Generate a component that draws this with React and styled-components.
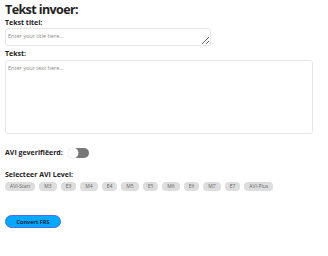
import React, { useState } from 'react'
import styled, { createGlobalStyle } from 'styled-components'

const LEVELS = ['AVI-Start', 'M3', 'E3', 'M4', 'E4', 'M5', 'E5', 'M6', 'E6', 'M7', 'E7', 'AVI-Plus']

const GlobalStyle = createGlobalStyle`
  body {
    margin: 0;
    background: #fff;
    font-family: 'Open Sans', 'Liberation Sans', sans-serif;
    color: #222;
  }
`

const App = () => {
  const [verified, setVerified] = useState(false)

  return (
    <Page>
      <GlobalStyle />
      <Heading>Tekst invoer:</Heading>
      <Label $top={2}>Tekst titel:</Label>
      <TitleArea placeholder="Enter your title here..." />
      <Label $top={4}>Tekst:</Label>
      <TextArea placeholder="Enter your text here..." />
      <VerifyRow>
        <Label as="span">AVI geverifiëerd:</Label>
        <Toggle $on={verified} onClick={() => setVerified(!verified)} />
      </VerifyRow>
      <Label $top={13}>Selecteer AVI Level:</Label>
      <Levels>
        {LEVELS.map((level) => (
          <LevelButton key={level}>{level}</LevelButton>
        ))}
      </Levels>
      <ConvertButton>Convert FRS</ConvertButton>
    </Page>
  )
}

const Page = styled.div`
  display: flex;
  flex-direction: column;
  align-items: flex-start;
  padding: 2px 5px 3px;
`

const Heading = styled.h1`
  margin: 0;
  font-size: 12.5px;
  line-height: 15px;
  font-weight: 700;
  letter-spacing: -0.6px;
`

const Label = styled.div`
  margin-top: ${(p) => p.$top || 0}px;
  font-size: 7px;
  line-height: 8px;
  font-weight: 700;
`

const Field = styled.textarea`
  box-sizing: border-box;
  font-family: inherit;
  font-size: 5.5px;
  padding: 3px 2px;
  border: 1px solid #e6e6e6;
  border-radius: 3px;
  background: #fff;
  outline: none;

  &::placeholder {
    color: #888;
  }
`

const TitleArea = styled(Field)`
  margin-top: 1px;
  width: 206px;
  height: 18px;
`

const TextArea = styled(Field)`
  margin-top: 2px;
  width: 308px;
  height: 74px;
  resize: none;
`

const VerifyRow = styled.div`
  display: flex;
  align-items: center;
  gap: 5px;
  margin-top: 14px;
`

const Toggle = styled.button`
  position: relative;
  width: 21px;
  height: 10px;
  padding: 0;
  border: none;
  border-radius: 5px;
  background: ${(p) => (p.$on ? '#00aaff' : '#777')};
  cursor: pointer;

  &::before {
    content: '';
    position: absolute;
    top: 0;
    left: ${(p) => (p.$on ? '11px' : '0')};
    width: 10px;
    height: 10px;
    border-radius: 50%;
    background: #fff;
    box-shadow: 0 0 0 0.5px #e4e4e4;
  }
`

const Levels = styled.div`
  display: flex;
  gap: 4px;
  margin-top: 3px;
`

const LevelButton = styled.button`
  height: 9px;
  padding: 0 5px;
  border: none;
  border-radius: 4px;
  background: #ddd;
  color: #666;
  font-family: inherit;
  font-size: 5px;
  line-height: 9px;
`

const ConvertButton = styled.button`
  margin-top: 24px;
  width: 56px;
  height: 13px;
  padding: 0;
  border: 1px solid #5566ee;
  border-radius: 7px;
  background: #00aaff;
  color: #223;
  font-family: inherit;
  font-size: 5.5px;
  font-weight: 700;
`

export default App
